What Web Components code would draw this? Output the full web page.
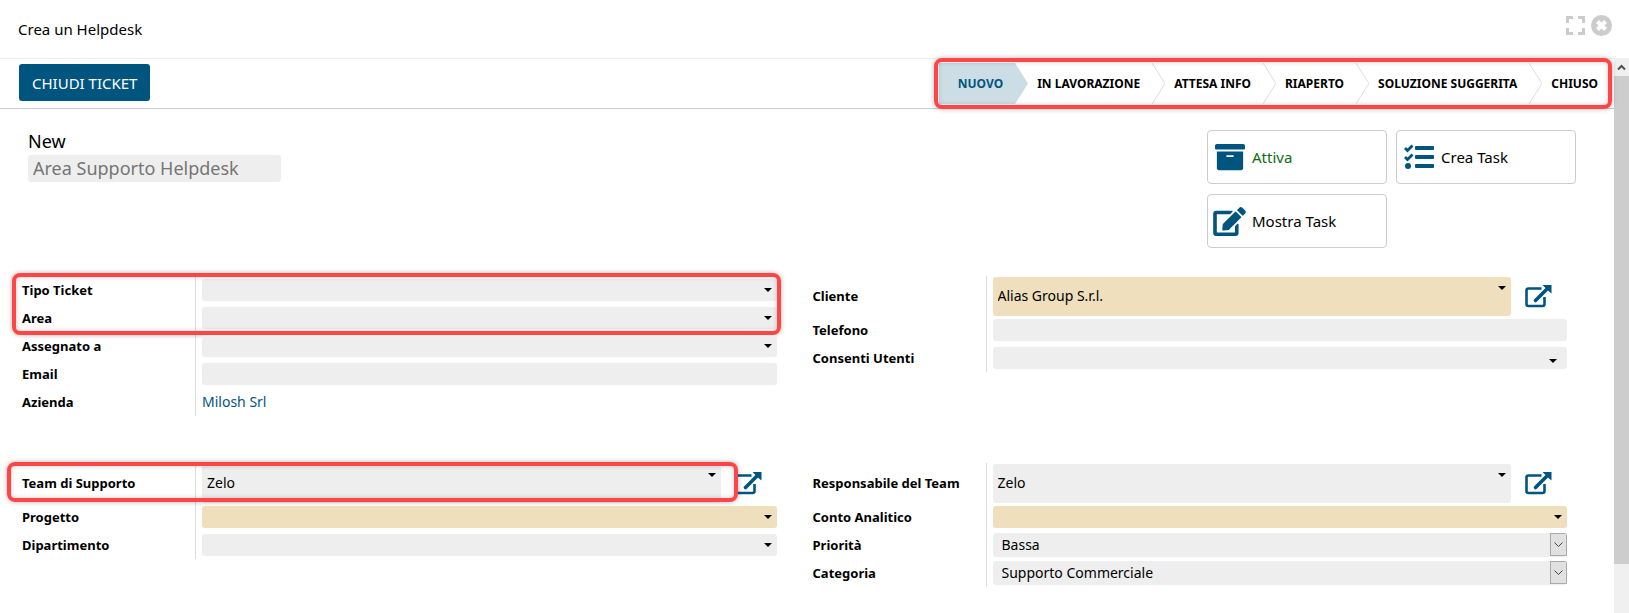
<!DOCTYPE html>
<html lang="it">
<head>
<meta charset="utf-8">
<title>Crea un Helpdesk</title>
<style>
  body {
    margin: 0;
    background: #fff;
    color: #000;
    font: 14px/20px "Noto Sans", "Open Sans", sans-serif;
    --brand: #00557f;
    --field: #eee;
    --required: #efdfbd;
    --line: #ccc;
    --mark: #ff4545;
  }
</style>
</head>
<body>

<helpdesk-dialog heading="Crea un Helpdesk">
  <status-bar slot="bar">
    <action-button slot="actions">CHIUDI TICKET</action-button>
    <status-step active>NUOVO</status-step>
    <status-step>IN LAVORAZIONE</status-step>
    <status-step>ATTESA INFO</status-step>
    <status-step>RIAPERTO</status-step>
    <status-step>SOLUZIONE SUGGERITA</status-step>
    <status-step last>CHIUSO</status-step>
  </status-bar>

  <ticket-title heading="New" placeholder="Area Supporto Helpdesk">
    <stat-button icon="archive" tone="ok">Attiva</stat-button>
    <stat-button icon="tasks">Crea Task</stat-button>
    <stat-button icon="edit">Mostra Task</stat-button>
  </ticket-title>

  <form-columns>
    <form-group>
      <mark-frame around="rows">
        <form-row label="Tipo Ticket" kind="combo"></form-row>
        <form-row label="Area" kind="combo"></form-row>
      </mark-frame>
      <form-row label="Assegnato a" kind="combo"></form-row>
      <form-row label="Email" kind="text"></form-row>
      <form-row label="Azienda" kind="link" value="Milosh Srl"></form-row>
    </form-group>
    <form-group>
      <form-row label="Cliente" kind="record" value="Alias Group S.r.l." required></form-row>
      <form-row label="Telefono" kind="text"></form-row>
      <form-row label="Consenti Utenti" kind="tags"></form-row>
    </form-group>
  </form-columns>

  <form-columns>
    <form-group>
      <mark-frame around="record">
        <form-row label="Team di Supporto" kind="record" value="Zelo"></form-row>
      </mark-frame>
      <form-row label="Progetto" kind="combo" required></form-row>
      <form-row label="Dipartimento" kind="combo"></form-row>
    </form-group>
    <form-group>
      <form-row label="Responsabile del Team" kind="record" value="Zelo"></form-row>
      <form-row label="Conto Analitico" kind="combo" required></form-row>
      <form-row label="Priorità" kind="select" value="Bassa"></form-row>
      <form-row label="Categoria" kind="select" value="Supporto Commerciale"></form-row>
    </form-group>
  </form-columns>
</helpdesk-dialog>

<script>
const define = (name, render) => customElements.define(name, class extends HTMLElement {
  connectedCallback() {
    if (this.shadowRoot) return;
    this.attachShadow({ mode: 'open' }).innerHTML = render(this);
  }
});

const ICONS = {
  archive: '<svg width="30" height="30" viewBox="0 0 512 512"><path d="M32 448c0 17.7 14.3 32 32 32h384c17.7 0 32-14.3 32-32V160H32v288zm160-212c0-6.6 5.400-12 12-12h104c6.600 0 12 5.400 12 12v8c0 6.600-5.400 12-12 12H204c-6.600 0-12-5.400-12-12v-8zM480 32H32C14.3 32 0 46.3 0 64v48c0 8.800 7.200 16 16 16h480c8.800 0 16-7.200 16-16V64c0-17.700-14.300-32-32-32z"/></svg>',
  tasks: '<svg width="30" height="26" viewBox="0 0 30 26"><rect x="11" y="2" width="19" height="4" rx="1"/><rect x="11" y="11" width="19" height="4" rx="1"/><rect x="11" y="20" width="19" height="4" rx="1"/><circle cx="4" cy="22" r="3"/><path d="M1 4l2.500 2.500L8.500 1.500M1 13l2.500 2.500L8.500 10.500" fill="none" stroke="currentColor" stroke-width="2.800"/></svg>',
  edit: '<svg width="33" height="29" viewBox="0 0 576 512"><path d="M402.6 83.2l90.2 90.2c3.8 3.8 3.8 10 0 13.8L274.4 405.6l-92.8 10.3c-12.4 1.4-22.9-9.1-21.5-21.5l10.3-92.8L388.8 83.2c3.8-3.8 10-3.8 13.8 0zm162-22.9l-48.8-48.8c-15.2-15.2-39.9-15.2-55.2 0l-35.4 35.4c-3.8 3.8-3.8 10 0 13.8l90.2 90.2c3.8 3.8 10 3.8 13.8 0l35.4-35.4c15.2-15.3 15.2-40 0-55.2zM384 346.2V448H64V128h229.8c3.2 0 6.2-1.3 8.5-3.5l40-40c7.6-7.6 2.2-20.5-8.5-20.5H48C21.5 64 0 85.5 0 112v352c0 26.5 21.5 48 48 48h352c26.5 0 48-21.5 48-48V306.2c0-10.7-12.9-16-20.5-8.5l-40 40c-2.2 2.3-3.5 5.3-3.5 8.5z"/></svg>',
  external: '<svg width="27" height="24" viewBox="0 0 27 24"><path d="M16.5 4.5H3.5Q1.5 4.5 1.5 6.5V20Q1.5 22 3.5 22H17.5Q19.5 22 19.5 20V13" fill="none" stroke="currentColor" stroke-width="2.6"/><path d="M10.5 16.5L22 5" fill="none" stroke="currentColor" stroke-width="3.6" stroke-linecap="round"/><path d="M17.5 1H26.5V9.5L24 7.5 20 3.5z"/></svg>',
  caret: '<svg class="caret" width="8" height="4" viewBox="0 0 8 4"><path d="M0 0h8L4 4z"/></svg>'
};

define('helpdesk-dialog', el => `
  <style>
    :host { display: flex; flex-direction: column; min-height: 100vh; }
    header { display: flex; align-items: center; gap: 6px; height: 58px; padding: 0 17px 0 18px; box-sizing: border-box; }
    h1 { flex: 1; margin: 0; font-size: 15px; font-weight: 400; line-height: 20px; }
    header button { display: flex; padding: 0; margin-bottom: 7px; border: 0; background: none; color: var(--line); }
    .view { flex: 1; display: flex; }
    main { flex: 1; min-width: 0; border-top: 1px solid #eee; }
    .scroll { width: 15px; display: flex; flex-direction: column; background: #f0f0f0; }
    .up { display: flex; align-items: center; justify-content: center; height: 18px; }
    .thumb { flex: 10; background: #cdcdcd; }
    .rest { flex: 1; }
  </style>
  <header>
    <h1>${el.getAttribute('heading')}</h1>
    <button type="button" aria-label="Schermo intero"><svg width="19" height="19" viewBox="0 0 19 19" fill="none" stroke="currentColor" stroke-width="3"><path d="M1.5 7V1.5H7M12 1.5H17.5V7M17.5 12V17.5H12M7 17.5H1.5V12"/></svg></button>
    <button type="button" aria-label="Chiudi"><svg width="21" height="21" viewBox="0 0 21 21"><circle cx="10.5" cy="10.5" r="10.5" fill="currentColor"/><path d="M6.5 6.5l8 8M14.5 6.5l-8 8" stroke="#fff" stroke-width="4"/></svg></button>
  </header>
  <div class="view">
    <main><slot name="bar"></slot><slot></slot></main>
    <div class="scroll" aria-hidden="true">
      <div class="up"><svg width="9" height="7" viewBox="0 0 9 7" fill="none" stroke="#505050" stroke-width="2"><path d="M1 5.5L4.5 2 8 5.5"/></svg></div>
      <div class="thumb"></div><div class="rest"></div>
    </div>
  </div>`);

define('status-bar', () => `
  <style>
    :host { display: flex; align-items: center; justify-content: space-between; height: 49px; padding: 0 2px 0 19px; border-bottom: 1px solid var(--line); }
    ol { position: relative; display: flex; margin: 0; padding: 4px 14px 4px 5px; }
    ol::after { content: ""; position: absolute; inset: -1px 0 -1px 0; border: 4px solid var(--mark); border-radius: 8px; box-shadow: 0 0 5px rgba(0,0,0,.3), inset 0 0 5px rgba(0,0,0,.2); pointer-events: none; }
  </style>
  <slot name="actions"></slot>
  <ol role="list"><slot></slot></ol>`);

define('action-button', () => `
  <style>
    :host { display: block; padding-bottom: 2px; }
    button { display: block; height: 37px; padding: 0 13px; border: 0; border-radius: 3px; background: var(--brand); color: #fff; font: 15px/20px "Noto Sans", sans-serif; }
  </style>
  <button type="button"><slot></slot></button>`);

define('status-step', el => `
  <style>
    :host { display: flex; height: 41px; font-size: 12px; font-weight: 700; }
    span { display: flex; align-items: center; padding: 0 12px 0 9px; }
    svg { display: block; }
    :host([active]) { color: var(--brand); }
    :host([active]) span { padding-left: 19px; background: #ccdde5; }
    :host([last]) span { padding-right: 0; }
  </style>
  <span role="listitem"><slot></slot></span>
  ${el.hasAttribute('last') ? '' : `<svg width="13" height="41" viewBox="0 0 13 41"><path d="M0 0L13 20.5 0 41" ${el.hasAttribute('active') ? 'fill="#ccdde5"' : 'fill="none" stroke="#ddd"'}/></svg>`}`);

define('ticket-title', el => `
  <style>
    :host { display: flex; justify-content: space-between; align-items: flex-start; padding: 21px 38px 28px 28px; }
    label { display: block; margin-bottom: 3px; font-size: 18px; line-height: 22px; }
    input { display: block; width: 253px; height: 27px; box-sizing: border-box; padding: 0 5px 2px; border: 0; border-radius: 3px; background: var(--field); font: 18px/24px "Noto Sans", sans-serif; }
    input::placeholder { color: #757575; opacity: 1; }
    .buttons { display: grid; grid-template-columns: 180px 180px; gap: 10px 9px; }
  </style>
  <div><label for="name">${el.getAttribute('heading')}</label><input id="name" placeholder="${el.getAttribute('placeholder')}"></div>
  <div class="buttons"><slot></slot></div>`);

define('stat-button', el => `
  <style>
    :host { display: block; }
    button { display: flex; align-items: center; gap: 6px; width: 100%; height: 54px; padding: 0 5px; border: 1px solid var(--line); border-radius: 4px; background: #fff; color: #000; font: 15px/20px "Noto Sans", sans-serif; }
    :host([tone=ok]) button { color: #106b10; }
    i { display: flex; justify-content: center; width: 33px; color: var(--brand); }
    svg { fill: currentColor; }
  </style>
  <button type="button"><i>${ICONS[el.getAttribute('icon')]}</i><slot></slot></button>`);

define('form-columns', () => `
  <style>
    :host { display: grid; grid-template-columns: 1fr 1fr; align-items: start; gap: 36px; padding: 0 47px 47px 22px; }
    :host(:last-child) { padding-bottom: 24px; }
  </style>
  <slot></slot>`);

define('form-group', () => `<style>:host { display: block; }</style><slot></slot>`);

define('mark-frame', () => `
  <style>
    :host { display: block; position: relative; }
    :host::after { content: ""; position: absolute; border: 4px solid var(--mark); border-radius: 8px; box-shadow: 0 0 5px rgba(0,0,0,.3), inset 0 0 5px rgba(0,0,0,.2); pointer-events: none; }
    :host([around=rows])::after { inset: -3px -4px -3px -10px; }
    :host([around=record])::after { inset: -1px 39px 1px -15px; }
  </style>
  <slot></slot>`);

define('form-row', el => {
  const kind = el.getAttribute('kind');
  const value = el.getAttribute('value') || '';
  const label = el.getAttribute('label');
  const combo = `<div class="field"><input id="f" role="combobox" aria-expanded="false" value="${value}">${ICONS.caret}</div>`;
  const control = {
    combo, tags: combo,
    text: '<div class="field"><input id="f"></div>',
    record: `${combo}<button type="button" aria-label="Apri ${label}">${ICONS.external}</button>`,
    link: `<a id="f" href="#">${value}</a>`,
    select: `<div class="field"><select id="f"><option>${value}</option></select><span class="drop"><svg width="9" height="5" viewBox="0 0 9 5" fill="none" stroke="#444"><path d="M.5 .5l4 4 4-4"/></svg></span></div>`
  }[kind];
  return `
  <style>
    :host { display: grid; grid-template-columns: 173px 1fr; height: 28px; }
    :host([kind=record]) { height: 40px; }
    label { align-self: center; font-size: 13px; font-weight: 700; line-height: 20px; }
    .control { display: flex; align-items: center; padding-left: 6px; border-left: 1px solid #ddd; }
    .field { position: relative; flex: 1; display: flex; height: 22px; border-radius: 3px; background: var(--field); overflow: hidden; }
    :host([required]) .field { background: var(--required); }
    :host([kind=record]) .field { height: 39px; }
    :host([kind=select]) .field { height: 24px; }
    input, select { flex: 1; min-width: 0; box-sizing: border-box; margin: 0; padding: 0 20px 0 5px; border: 0; background: none; color: #000; font: 14px/20px "Noto Sans", sans-serif; }
    select { appearance: none; padding-left: 9px; }
    .caret { position: absolute; right: 5px; top: 9px; }
    :host([kind=tags]) .caret { right: 10px; top: 12px; }
    .drop { position: absolute; inset: 0 0 1px auto; width: 15px; display: flex; align-items: center; justify-content: center; border: 1px solid #aaa; background: #e1e1e1; pointer-events: none; }
    button { display: flex; width: 56px; padding: 0 0 0 14px; border: 0; background: none; color: var(--brand); }
    button svg { fill: currentColor; }
    a { color: var(--brand); text-decoration: none; }
  </style>
  <label for="f">${label}</label><div class="control">${control}</div>`;
});
</script>
</body>
</html>
